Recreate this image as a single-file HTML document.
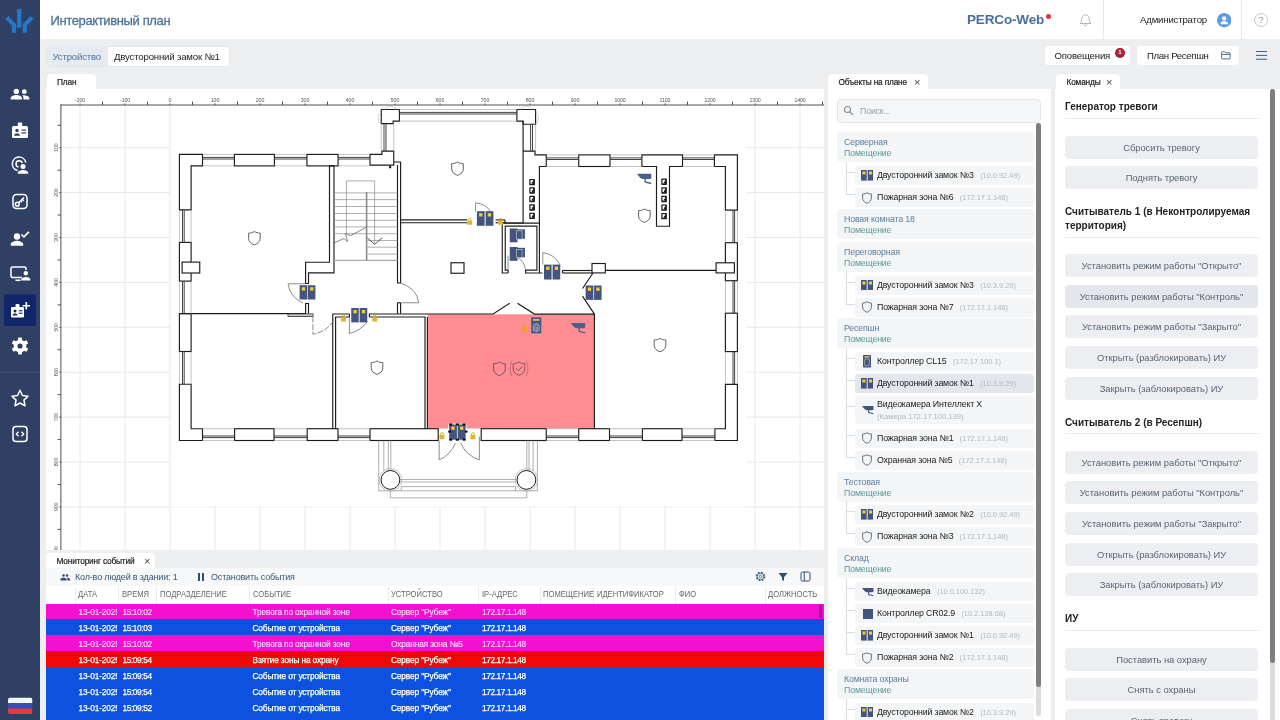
<!DOCTYPE html>
<html lang="ru">
<head>
<meta charset="utf-8">
<title>Интерактивный план</title>
<style>
*{box-sizing:border-box;margin:0;padding:0}
html,body{width:1280px;height:720px;overflow:hidden}
body{position:relative;background:#eceef0;font-family:"Liberation Sans","DejaVu Sans",sans-serif;font-size:9px;color:#222;letter-spacing:-0.17px}
.abs{position:absolute}
svg{display:block}
#side{left:0;top:0;width:40px;height:720px;background:rgba(47,63,100,.995)}
#hdr{left:40px;top:0;width:1240px;height:39px;background:rgba(255,255,255,.995)}
#title{left:50.5px;top:12.8px;-webkit-text-stroke:0.3px #4d7399;font-size:13px;line-height:16px;color:#4d7399;white-space:nowrap;letter-spacing:-0.37px}
.vdiv{width:1px;background:rgba(230,232,235,.995);top:0;height:39px}
.btn{background:rgba(255,255,255,0.995);border-radius:3px;height:19.5px;top:45.5px;line-height:20px;font-size:9.6px;color:#222;white-space:nowrap}
.tab{background:rgba(255,255,255,0.995);border-radius:4px 4px 0 0;height:15px;font-size:8.3px;line-height:17px;color:#222;white-space:nowrap;padding-left:10.5px;overflow:hidden}
.tab .x{position:absolute;top:0;font-size:11px;color:#444;line-height:16px;-webkit-text-stroke:0}
.panel{background:rgba(255,255,255,.995)}
.tbt{font-size:9px;line-height:14px;color:#3a5679;white-space:nowrap}
.cmdh{position:absolute;left:1065px;font-weight:bold;letter-spacing:0;font-size:10px;color:#222;line-height:15px;white-space:nowrap}
.hr{position:absolute;left:1065px;width:194px;height:1px;background:rgba(231,233,236,.995)}
.cb{position:absolute;left:1065px;width:193px;height:23px;border-radius:4px;background:rgba(236,238,241,0.995);color:#5b6673;font-size:9.4px;letter-spacing:-0.03px;line-height:23px;text-align:center;white-space:nowrap}
.grp{position:absolute;left:837px;width:197px;height:30px;background:rgba(244,245,246,0.995);border-radius:4px;padding:5px 0 0 7px;font-size:8.8px;line-height:11.3px;white-space:nowrap}
.grp b{font-weight:normal;color:#5b7f9f;display:block}
.grp i{font-style:normal;color:#5a9a96;display:block}
.it{position:absolute;left:855px;width:179px;height:19px;background:rgba(244,245,246,0.995);border-radius:3px;font-size:8.8px;line-height:19px;white-space:nowrap;padding-left:22px;color:#222}
.it .ip{color:#b4b8bd;font-size:7.5px;letter-spacing:-0.05px;margin-left:4.2px}
.it svg{position:absolute}
.th{position:absolute;top:587px;letter-spacing:0;font-size:8.6px;transform:scaleX(0.885);transform-origin:0 50%;color:#666;line-height:14px;white-space:nowrap}
.row{position:absolute;left:46px;width:778px;height:16px;color:#fff;letter-spacing:-0.12px;font-size:8.3px;line-height:18px;-webkit-text-stroke:0.25px #fff;white-space:nowrap}
.row span{position:absolute;top:0;white-space:nowrap}
.row .dg{letter-spacing:-0.4px}
.tab{-webkit-text-stroke:0.2px #222}
#root{position:absolute;left:0;top:0;width:1280px;height:720px;opacity:0.999}

</style>
</head>
<body>
<div id="root">
<div id="side" class="abs">
<svg width="40" height="720" viewBox="0 0 40 720">
<!-- logo -->
<g fill="none" stroke="#2279c8" stroke-width="4.2">
<path d="M19.2 9v18.5"/>
<path d="M6.8 17.5l7.2 7.3v8"/>
<path d="M32 17.5l-7.2 7.3v8"/>
</g>
<!-- people -->
<g fill="#fff">
<circle cx="16.3" cy="91.4" r="2.7"/><circle cx="24.3" cy="91.7" r="2.4"/>
<path d="M10.7 99.5v-1.6c0-2 3.7-3 5.6-3s5.6 1 5.6 3v1.6z"/>
<path d="M23.4 99.5v-1.8c0-1-.5-1.8-1.3-2.4 2.3-.4 7.2.5 7.2 2.6v1.6z"/>
</g>
<!-- badge -->
<g>
<rect x="12" y="126" width="16" height="12" rx="1.5" fill="#fff"/>
<rect x="17.8" y="122.5" width="4.4" height="5" rx="1" fill="#fff"/>
<circle cx="17" cy="130.5" r="1.7" fill="#2f3f64"/>
<path d="M14 135.8c0-1.7 1.5-2.3 3-2.3s3 .6 3 2.3z" fill="#2f3f64"/>
<rect x="21.5" y="129.5" width="4.5" height="1.2" fill="#2f3f64"/><rect x="21.5" y="132.3" width="4.5" height="1.2" fill="#2f3f64"/>
</g>
<!-- location person -->
<g fill="none" stroke="#fff" stroke-width="1.5">
<path d="M17.5 170.5a6.8 6.8 0 1 1 8.3-8"/>
<path d="M18.5 167a3.2 3.2 0 1 1 3.8-4"/>
</g>
<circle cx="23" cy="166.5" r="2.5" fill="#fff"/>
<path d="M17.8 173.8v-1c0-2 3.4-2.9 5.2-2.9s5.2.9 5.2 2.9v1z" fill="#fff"/>
<!-- key -->
<g fill="none" stroke="#fff" stroke-width="1.5">
<rect x="13" y="194.5" width="14" height="14" rx="3.5"/>
<circle cx="17.3" cy="204.2" r="1.9"/>
<path d="M18.7 202.8l5.3-5.3m-1.8 1.8l1.6 1.6m-3.2 0l1.2 1.2"/>
</g>
<!-- person check -->
<circle cx="17" cy="236.5" r="3.2" fill="#fff"/>
<path d="M10.8 245.8v-1.6c0-2.3 4.1-3.5 6.2-3.5s6.2 1.2 6.2 3.5v1.6z" fill="#fff"/>
<path d="M21.5 234.5l2.4 2.4 5-5" fill="none" stroke="#fff" stroke-width="1.7"/>
<!-- monitor person -->
<g fill="none" stroke="#fff" stroke-width="1.5">
<path d="M22 277.5h-9.5a1.5 1.5 0 0 1-1.5-1.5v-7.5a1.5 1.5 0 0 1 1.5-1.5h12a1.5 1.5 0 0 1 1.5 1.5v1.5"/>
<path d="M15.5 280.3h5"/>
</g>
<circle cx="25.8" cy="273.3" r="2.2" fill="#fff"/>
<path d="M21.3 280.5v-.9c0-1.8 3-2.6 4.5-2.6s4.5.8 4.5 2.6v.9z" fill="#fff"/>
<!-- active: badge plus -->
<rect x="4" y="294.5" width="32" height="31.5" rx="2" fill="#11266a"/>
<rect x="11" y="307" width="13" height="10.5" rx="1.3" fill="#fff"/>
<rect x="15.5" y="304" width="4" height="4.5" rx="1" fill="#fff"/>
<circle cx="15" cy="311" r="1.5" fill="#11266a"/>
<path d="M12.5 315.5c0-1.5 1.3-2 2.5-2s2.5.5 2.5 2z" fill="#11266a"/>
<rect x="18.8" y="310.2" width="3.7" height="1.1" fill="#11266a"/><rect x="18.8" y="312.7" width="3.7" height="1.1" fill="#11266a"/>
<path d="M26.3 302v7.5m-3.75-3.75h7.5" stroke="#fff" stroke-width="1.7" fill="none"/>
<!-- gear -->
<g transform="translate(20 346)">
<g fill="#fff">
<rect x="-1.9" y="-8.5" width="3.8" height="17" rx="0.8"/>
<rect x="-1.9" y="-8.5" width="3.8" height="17" rx="0.8" transform="rotate(60)"/>
<rect x="-1.9" y="-8.5" width="3.8" height="17" rx="0.8" transform="rotate(120)"/>
<circle r="6.3"/>
</g>
<circle r="2.6" fill="#2f3f64"/>
</g>
<!-- divider -->
<rect x="0" y="372" width="40" height="1" fill="#3e4f77"/>
<!-- star -->
<path d="M20 390.3l2.45 5.2 5.6.75-4.1 3.9 1.05 5.6-5-2.75-5 2.75 1.05-5.6-4.1-3.9 5.6-.75z" fill="none" stroke="#fff" stroke-width="1.5" stroke-linejoin="round"/>
<!-- code -->
<rect x="13" y="426.5" width="14" height="15" rx="3" fill="none" stroke="#fff" stroke-width="1.5"/>
<path d="M18.5 431.8l-2.2 2.2 2.2 2.2m3-4.4l2.2 2.2-2.2 2.2" fill="none" stroke="#fff" stroke-width="1.3"/>
<!-- flag -->
<clipPath id="fc"><rect x="8" y="697.5" width="24.5" height="16.5" rx="2.5"/></clipPath>
<g clip-path="url(#fc)"><rect x="8" y="697.5" width="24.5" height="5.5" fill="#f4f5f7"/><rect x="8" y="703" width="24.5" height="5.5" fill="#3a4fb5"/><rect x="8" y="708.5" width="24.5" height="5.5" fill="#e23a4a"/></g>
</svg>
</div>

<div id="hdr" class="abs"></div>
<div id="title" class="abs">Интерактивный план</div>
<div class="abs" style="left:967px;top:11px;font-size:13.5px;line-height:18px;font-weight:bold;color:#4a6ea3;letter-spacing:-0.15px;white-space:nowrap">PERCo-Web</div>
<div class="abs" style="left:1045.5px;top:14px;width:5px;height:5px;border-radius:50%;background:rgba(224,50,60,.995)"></div>
<div class="abs vdiv" style="left:1103px"></div>
<div class="abs" style="left:1140px;top:13px;font-size:9.6px;line-height:14px;color:#222;white-space:nowrap">Администратор</div>
<div class="abs vdiv" style="left:1240.5px"></div>
<div class="abs" style="left:46px;top:45.5px;width:183.5px;height:21px;background:rgba(255,255,255,.995);border-radius:3px;border:1px solid #e4e7ea"></div>
<div class="abs" style="left:46.5px;top:46px;width:61.5px;height:20px;background:rgba(229,235,241,.995);border-radius:3px 0 0 3px"></div>
<div class="abs" style="left:52.5px;top:50px;font-size:9.6px;line-height:14px;color:#4d7399;white-space:nowrap">Устройство</div>
<div class="abs" style="left:114px;top:50px;font-size:9.6px;line-height:14px;color:#222;white-space:nowrap">Двусторонний замок №1</div>
<div class="abs btn" style="left:1045px;width:85px;padding-left:9.5px">Оповещения</div>
<div class="abs" style="left:1115px;top:48px;width:9.5px;height:9.5px;border-radius:50%;background:rgba(168,35,47,.995);color:#fff;font-size:6px;line-height:9.5px;text-align:center;font-weight:bold">1</div>
<div class="abs btn" style="left:1136.5px;width:102px;padding-left:10.5px;letter-spacing:-0.33px">План Ресепшн</div>
<div class="abs" style="left:1256px;top:50.6px;width:11.2px;height:1.8px;background:rgba(52,96,140,.995);box-shadow:0 3.9px 0 #34608c,0 7.7px 0 #34608c"></div>
<svg class="abs" style="left:1078px;top:13px" width="15" height="15" viewBox="0 0 15 15" fill="none" stroke="#b3b3b3" stroke-width="1"><path d="M2 10.5c1.3-1 1.7-2.3 1.7-4.3 0-2.5 1.5-4.4 3.8-4.4s3.8 1.9 3.8 4.4c0 2 .4 3.3 1.7 4.3z"/><path d="M5.8 11.3c.2 1 .9 1.5 1.7 1.5s1.5-.5 1.7-1.5"/></svg>
<svg class="abs" style="left:1217px;top:13.4px" width="14.4" height="14.4" viewBox="0 0 14.4 14.4"><circle cx="7.2" cy="7.2" r="7.2" fill="#5b9de0"/><circle cx="7.2" cy="5.4" r="2.1" fill="#fff"/><path d="M3.3 10.8c0-2 2.4-2.8 3.9-2.8s3.9.8 3.9 2.8v.4H3.3z" fill="#fff"/></svg>
<div class="abs" style="left:1253.7px;top:13px;width:14.2px;height:14.2px;border-radius:50%;border:1px solid #c6c6c6;color:#9a9a9a;font-size:9.5px;line-height:12.5px;text-align:center;letter-spacing:0">?</div>
<svg class="abs" style="left:1220.5px;top:51px" width="10" height="9" viewBox="0 0 10 9" fill="none" stroke="#44627f" stroke-width="0.9"><path d="M.6 7.2V1.4c0-.4.3-.7.7-.7h2.4l1 1.1h3.8c.4 0 .7.3.7.7v4.7c0 .4-.3.7-.7.7H1.3c-.4 0-.7-.3-.7-.7zM.6 3.4h8.6"/></svg>

<div class="abs tab" style="left:46.5px;top:74px;width:49.5px">План</div>
<div class="abs panel" style="left:46px;top:88.5px;width:778px;height:461.5px;border-radius:0 3px 0 0"></div>
<svg class="abs" style="left:46px;top:88.5px" width="778" height="461.5" viewBox="46 88.5 778 461.5" font-family="Liberation Sans, sans-serif">
<g stroke="#e5e8ee" stroke-width="1" fill="none">
<path d="M80 105V550"/>
<path d="M125 105V550"/>
<path d="M170 105V550"/>
<path d="M215 105V550"/>
<path d="M260 105V550"/>
<path d="M305 105V550"/>
<path d="M350 105V550"/>
<path d="M395 105V550"/>
<path d="M440 105V550"/>
<path d="M485 105V550"/>
<path d="M530 105V550"/>
<path d="M575 105V550"/>
<path d="M620 105V550"/>
<path d="M665 105V550"/>
<path d="M710 105V550"/>
<path d="M755 105V550"/>
<path d="M800 105V550"/>
<path d="M61 147.2H824"/>
<path d="M61 192.1H824"/>
<path d="M61 237H824"/>
<path d="M61 281.9H824"/>
<path d="M61 326.8H824"/>
<path d="M61 371.7H824"/>
<path d="M61 416.6H824"/>
<path d="M61 461.5H824"/>
<path d="M61 506.4H824"/>
</g>
<rect x="170.4" y="102" width="576.2" height="404.2" fill="#fff"/>
<path d="M170 105V506" stroke="#eceff3" stroke-width="0.8"/>
<g fill="#fff" stroke="#1c1c1c" stroke-width="1.15" stroke-linejoin="miter">
<rect x="427.8" y="313.8" width="166.6" height="114.2" fill="#ff8d92" stroke="none"/>
<polygon points="179.4,153.9 202.5,153.9 202.5,165.4 191.1,165.4 191.1,209.4 179.4,209.4"/>
<rect x="234.4" y="153.9" width="40" height="11.5"/>
<rect x="306.9" y="153.9" width="31.2" height="11.5"/>
<polygon points="370,153.9 381.9,153.9 381.9,150.6 393.75,150.6 393.75,164.6 370,164.6"/>
<rect x="179.4" y="241.9" width="11.7" height="38.7"/>
<rect x="179.4" y="313.1" width="11.7" height="37.9"/>
<polygon points="179.4,383.75 191.1,383.75 191.1,428.2 202.5,428.2 202.5,440 179.4,440"/>
<rect x="234.6" y="428.2" width="39.4" height="11.8"/>
<rect x="307.2" y="428.2" width="30.8" height="11.8"/>
<rect x="370" y="428.2" width="68.2" height="11.8"/>
<rect x="481.2" y="428.2" width="65.05" height="11.8"/>
<rect x="578.75" y="428.2" width="30.75" height="11.8"/>
<rect x="642.4" y="428.2" width="39.6" height="11.8"/>
<polygon points="725.4,383.8 737.4,383.8 737.4,440 714.9,440 714.9,428.2 725.4,428.2"/>
<rect x="725.4" y="242.2" width="12" height="38"/>
<rect x="725.4" y="312.7" width="12" height="38.4"/>
<polygon points="714.4,154.4 737.4,154.4 737.4,209.6 725.4,209.6 725.4,166 714.4,166"/>
<rect x="578.75" y="154.4" width="31.25" height="11.6"/>
<polygon points="641.9,154.4 682.5,154.4 682.5,166 669.5,166 669.5,225.7 656.5,225.7 656.5,166 641.9,166"/>
<polygon points="381.25,109 399.4,109 399.4,120.6 393.1,120.6 393.1,123.1 381.25,123.1"/>
<polygon points="516.9,109 535.6,109 535.6,123.75 523.1,123.75 523.1,120.6 516.9,120.6"/>
<polyline points="523.1,120.6 523.1,222.5 505,222.5 505,219.4" fill="none"/>
<polyline points="523.1,150.6 535,150.6 535,154.4 546.25,154.4 546.25,166 539.4,166 539.4,272.5" fill="none"/>
<polyline points="393.75,161.5 400.6,161.5 400.6,282.5 397.5,282.5 397.5,164.6" fill="none"/>
<polyline points="397.5,302.25 397.5,313.3" fill="none"/>
<polyline points="400.6,302.25 400.6,313.3" fill="none"/>
<polyline points="397.5,302.25 400.6,302.25" fill="none"/>
<polyline points="400.6,219.4 467,219.4" fill="none"/>
<polyline points="400.6,222.25 467,222.25" fill="none"/>
<polyline points="495.6,219.4 505,219.4" fill="none"/>
<polyline points="495.6,222.25 505,222.25" fill="none"/>
<polygon points="329.5,165.4 329.5,261.7 305.6,261.7 305.6,283 308.5,283 308.5,272.3 334,272.3 334,165.4" fill="none"/>
<polyline points="305.6,313.1 305.6,303 308.5,303 308.5,313.1" fill="none"/>
<polyline points="179.4,313.1 306,313.1" fill="none"/>
<rect x="288" y="313.4" width="25.1" height="2.6" fill="#c4c4c4" stroke-width="0.7"/>
<polyline points="349.4,313.5 332.75,313.5 332.75,428.2" fill="none"/>
<polyline points="349.4,316.5 335.6,316.5 335.6,428.2" fill="none"/>
<polyline points="349.4,313.5 349.4,316.5" fill="none"/>
<polyline points="369.4,316.5 369.4,313.5 493.1,313.5 509.75,302.75" fill="none"/>
<polyline points="369.4,316.5 425,316.5 425,428.2" fill="none"/>
<polyline points="427.4,316.5 427.4,428.2" fill="none"/>
<polyline points="517.5,302.75 534.4,313.6 594.4,313.6 594.4,428.2" fill="none"/>
<polyline points="594.4,313.6 582.5,295.6" fill="none"/>
<polyline points="582.5,288 593,272.5" fill="none"/>
<polyline points="508.1,272.5 502.25,272.5 502.25,222.6 540,222.6" fill="none"/>
<polyline points="508.1,269.6 505.25,269.6 505.25,225.6 536.9,225.6 536.9,269.6 525.6,269.6 525.6,272.5 542.5,272.5" fill="none"/>
<polyline points="508.1,269.6 508.1,272.5" fill="none"/>
<polyline points="562.5,270 592,270" fill="none"/>
<polyline points="562.5,272.5 592,272.5" fill="none"/>
<polyline points="562.5,270 562.5,272.5" fill="none"/>
<polyline points="605.3,269.9 716.1,269.9" fill="none"/>
<rect x="182.1" y="261.6" width="17.65" height="10.9"/>
<rect x="451" y="262.25" width="13" height="10.5"/>
<rect x="592" y="263" width="13.3" height="9.4"/>
<rect x="716.1" y="262.3" width="18.3" height="10.1"/>
</g>
<g fill="none" stroke="#9a9a9a" stroke-width="0.6">
<path d="M202.5 153.9H234.4M202.5 165.4H234.4"/>
<path d="M202.5 156.9H234.4M202.5 158.5H234.4" stroke="#3a3a3a" stroke-width="0.95"/>
<path d="M274.4 153.9H306.9M274.4 165.4H306.9"/>
<path d="M274.4 156.9H306.9M274.4 158.5H306.9" stroke="#3a3a3a" stroke-width="0.95"/>
<path d="M338.1 153.9H370M338.1 165.4H370"/>
<path d="M338.1 156.9H370M338.1 158.5H370" stroke="#3a3a3a" stroke-width="0.95"/>
<path d="M202.5 440H234.6M202.5 428.2H234.6"/>
<path d="M202.5 437.1H234.6M202.5 435.5H234.6" stroke="#3a3a3a" stroke-width="0.95"/>
<path d="M274 440H307.2M274 428.2H307.2"/>
<path d="M274 437.1H307.2M274 435.5H307.2" stroke="#3a3a3a" stroke-width="0.95"/>
<path d="M338 440H370M338 428.2H370"/>
<path d="M338 437.1H370M338 435.5H370" stroke="#3a3a3a" stroke-width="0.95"/>
<path d="M546.25 154.4H578.75M546.25 166H578.75"/>
<path d="M546.25 157.4H578.75M546.25 159H578.75" stroke="#3a3a3a" stroke-width="0.95"/>
<path d="M610 154.4H641.9M610 166H641.9"/>
<path d="M610 157.4H641.9M610 159H641.9" stroke="#3a3a3a" stroke-width="0.95"/>
<path d="M682.5 154.4H714.4M682.5 166H714.4"/>
<path d="M682.5 157.4H714.4M682.5 159H714.4" stroke="#3a3a3a" stroke-width="0.95"/>
<path d="M546.25 440H578.75M546.25 428.2H578.75"/>
<path d="M546.25 437.1H578.75M546.25 435.5H578.75" stroke="#3a3a3a" stroke-width="0.95"/>
<path d="M609.5 440H642.4M609.5 428.2H642.4"/>
<path d="M609.5 437.1H642.4M609.5 435.5H642.4" stroke="#3a3a3a" stroke-width="0.95"/>
<path d="M682 440H714.9M682 428.2H714.9"/>
<path d="M682 437.1H714.9M682 435.5H714.9" stroke="#3a3a3a" stroke-width="0.95"/>
<path d="M179.4 209.4V241.9M191.1 209.4V241.9"/>
<path d="M182.5 209.4V241.9M184.2 209.4V241.9" stroke="#3a3a3a" stroke-width="0.95"/>
<path d="M179.4 280.6V313.1M191.1 280.6V313.1"/>
<path d="M182.5 280.6V313.1M184.2 280.6V313.1" stroke="#3a3a3a" stroke-width="0.95"/>
<path d="M179.4 351V383.75M191.1 351V383.75"/>
<path d="M182.5 351V383.75M184.2 351V383.75" stroke="#3a3a3a" stroke-width="0.95"/>
<path d="M737.4 209.6V242.2M725.4 209.6V242.2"/>
<path d="M734.6 209.6V242.2M733 209.6V242.2" stroke="#3a3a3a" stroke-width="0.95"/>
<path d="M737.4 280.2V312.7M725.4 280.2V312.7"/>
<path d="M734.6 280.2V312.7M733 280.2V312.7" stroke="#3a3a3a" stroke-width="0.95"/>
<path d="M737.4 351.1V383.8M725.4 351.1V383.8"/>
<path d="M734.6 351.1V383.8M733 351.1V383.8" stroke="#3a3a3a" stroke-width="0.95"/>
<path d="M399.4 109H516.9M399.4 120.6H516.9"/>
<path d="M399.4 111.9H516.9M399.4 113.5H516.9" stroke="#3a3a3a" stroke-width="0.95"/>
<path d="M381.25 123.1V150.6M393.75 123.1V150.6"/>
<path d="M384 123.1V150.6M386 123.1V150.6" stroke="#3a3a3a" stroke-width="0.95"/>
<path d="M535.6 123.75V150.6"/><path d="M530.6 123.75V150.6M532.5 123.75V150.6" stroke="#3a3a3a" stroke-width="0.95"/>
<path d="M385 109a5.5 3 0 0 1 11 0M381.25 112a3 5.5 0 0 0 0 11M521 109a5.5 3 0 0 1 11 0M535.6 112a3 5.5 0 0 1 0 11" stroke="#bbb"/>
<g stroke="#8c8c8c" stroke-width="0.7">
<path d="M334 192.4H397.5"/>
<path d="M334 199.1H397.5"/>
<path d="M334 206H397.5"/>
<path d="M334 213H397.5"/>
<path d="M334 219.8H397.5"/>
<path d="M334 226.4H397.5"/>
<path d="M334 233.2H397.5"/>
<path d="M367.5 240H397.5"/>
<path d="M367.5 246.7H397.5"/>
<path d="M367.5 253.6H397.5"/>
<path d="M334 259.9H397.5" stroke-width="1.2" stroke="#aaa"/>
<path d="M346.4 233V180.4H374.6V243" />
<path d="M366.6 191.4V259.9" stroke-width="1.6" stroke="#8a8a8a"/>
<path d="M334 242.4L344 238L347.6 241L345.4 233L350.5 235.1L365.8 227.1" stroke="#555"/>
<path d="M367.3 237.3L374.6 243.9L382.2 237.3" stroke="#555" stroke-width="1"/>
</g>
<g stroke="#808080" stroke-width="0.9">
<path d="M305.6 283.3H288Q290 297 303 302.5"/>
<path d="M400.6 302.25H418.75Q417 288 400.6 282.5"/>
<path d="M312.9 316V333.75Q328 331 335 317.5" stroke-dasharray="6 1.5"/>
<path d="M349.4 316.5V333Q361 330 367.5 321"/>
<path d="M475.6 211V202.25Q486 203.5 490.5 211"/>
<path d="M508.1 269.6V255M518 257.5Q524.5 261 525.6 269.6"/>
<path d="M542.75 264V252Q555 254 560 264.4"/>
<path d="M439.2 440V459.4Q450 455 455.5 442.5M479.4 436V459.4Q466 455 460.7 442.5"/>
</g>
<g stroke="#8e8e8e" stroke-width="0.7">
<path d="M378.7 440V490.3H537.4V440M383.8 440V470M388.3 440V470M390.8 440V470M526.8 440V470M529 440V470M533.1 440V470"/>
<path d="M400 479H516.5M400 481.5H516.5M401.2 486.1H515.6M401.2 486.1V490.3M515.6 486.1V490.3M390.4 490.3V497.4H526.8V490.3"/>
<circle cx="390.4" cy="479.4" r="11.3" stroke="#aaa"/><circle cx="526.4" cy="479.4" r="11.3" stroke="#aaa"/>
</g>
<circle cx="390.4" cy="479.4" r="9.4" fill="#fff" stroke="#1c1c1c" stroke-width="1"/><circle cx="526.4" cy="479.4" r="9.4" fill="#fff" stroke="#1c1c1c" stroke-width="1"/>
</g>
<rect x="299.6" y="284.75" width="7.45" height="14.25" fill="#43557f"/><rect x="307.95" y="284.75" width="7.45" height="14.25" fill="#43557f"/>
<rect x="307.05" y="284.75" width="0.9" height="14.25" fill="#aebbd6"/>
<rect x="301.8" y="286.75" width="3.3" height="3.3" fill="#f2cf3a"/><rect x="310.15" y="286.75" width="3.3" height="3.3" fill="#f2cf3a"/>
<rect x="351.25" y="307.5" width="7.55" height="14.4" fill="#43557f"/><rect x="359.7" y="307.5" width="7.55" height="14.4" fill="#43557f"/>
<rect x="358.8" y="307.5" width="0.9" height="14.4" fill="#aebbd6"/>
<rect x="353.45" y="309.5" width="3.3" height="3.3" fill="#f2cf3a"/><rect x="361.9" y="309.5" width="3.3" height="3.3" fill="#f2cf3a"/>
<rect x="476.9" y="210.7" width="7.8" height="14.6" fill="#43557f"/><rect x="485.6" y="210.7" width="7.8" height="14.6" fill="#43557f"/>
<rect x="484.7" y="210.7" width="0.9" height="14.6" fill="#aebbd6"/>
<rect x="479.1" y="212.7" width="3.3" height="3.3" fill="#f2cf3a"/><rect x="487.8" y="212.7" width="3.3" height="3.3" fill="#f2cf3a"/>
<rect x="544" y="264.1" width="7.67" height="14.9" fill="#43557f"/><rect x="552.57" y="264.1" width="7.67" height="14.9" fill="#43557f"/>
<rect x="551.67" y="264.1" width="0.9" height="14.9" fill="#aebbd6"/>
<rect x="546.2" y="266.1" width="3.3" height="3.3" fill="#f2cf3a"/><rect x="554.77" y="266.1" width="3.3" height="3.3" fill="#f2cf3a"/>
<rect x="585.6" y="285" width="7.55" height="14.4" fill="#43557f"/><rect x="594.05" y="285" width="7.55" height="14.4" fill="#43557f"/>
<rect x="593.15" y="285" width="0.9" height="14.4" fill="#aebbd6"/>
<rect x="587.8" y="287" width="3.3" height="3.3" fill="#f2cf3a"/><rect x="596.25" y="287" width="3.3" height="3.3" fill="#f2cf3a"/>
<rect x="448.4" y="423.2" width="18" height="16.8" fill="#fff"/>
<rect x="449.2" y="424" width="7.75" height="15.2" fill="#43557f"/><rect x="457.85" y="424" width="7.75" height="15.2" fill="#43557f"/>
<rect x="456.95" y="424" width="0.9" height="15.2" fill="#aebbd6"/>
<rect x="451.4" y="426" width="3.3" height="3.3" fill="#f2cf3a"/><rect x="460.05" y="426" width="3.3" height="3.3" fill="#f2cf3a"/>
<rect x="449.2" y="423" width="3" height="2" fill="#111"/>
<rect x="455.9" y="423" width="3" height="2" fill="#111"/>
<rect x="462.6" y="423" width="3" height="2" fill="#111"/>
<rect x="448.2" y="430.1" width="3" height="2" fill="#111"/>
<rect x="464.6" y="430.1" width="3" height="2" fill="#111"/>
<rect x="449.2" y="438.2" width="3" height="2" fill="#111"/>
<rect x="455.9" y="438.2" width="3" height="2" fill="#111"/>
<rect x="462.6" y="438.2" width="3" height="2" fill="#111"/>
<rect x="341" y="316.8" width="5" height="4.3" rx="0.6" fill="#e3b42a"/><path d="M342.1 317v-1.1a1.4 1.4 0 0 1 2.8 0v1.1" fill="none" stroke="#e3b42a" stroke-width="1"/>
<rect x="372.25" y="316.8" width="5" height="4.3" rx="0.6" fill="#e3b42a"/><path d="M373.35 317v-1.1a1.4 1.4 0 0 1 2.8 0v1.1" fill="none" stroke="#e3b42a" stroke-width="1"/>
<rect x="467.1" y="220.05" width="5" height="4.3" rx="0.6" fill="#e3b42a"/><path d="M468.2 220.25v-1.1a1.4 1.4 0 0 1 2.8 0v1.1" fill="none" stroke="#e3b42a" stroke-width="1"/>
<rect x="498.1" y="220.05" width="5" height="4.3" rx="0.6" fill="#e3b42a"/><path d="M499.2 220.25v-1.1a1.4 1.4 0 0 1 2.8 0v1.1" fill="none" stroke="#e3b42a" stroke-width="1"/>
<rect x="439.4" y="434.4" width="5" height="4.3" rx="0.6" fill="#e3b42a"/><path d="M440.5 434.6v-1.1a1.4 1.4 0 0 1 2.8 0v1.1" fill="none" stroke="#e3b42a" stroke-width="1"/>
<rect x="470.4" y="434.4" width="5" height="4.3" rx="0.6" fill="#e3b42a"/><path d="M471.5 434.6v-1.1a1.4 1.4 0 0 1 2.8 0v1.1" fill="none" stroke="#e3b42a" stroke-width="1"/>
<rect x="521.9" y="326.8" width="5" height="4.3" rx="0.6" fill="#f0a21c"/><path d="M523 327v-1.1a1.4 1.4 0 0 1 2.8 0v1.1" fill="none" stroke="#f0a21c" stroke-width="1"/>
<path transform="translate(254.4 237.5)" d="M0 -6.6C-1.7 -5.3 -3.6 -4.9 -5.8 -4.9V0.5C-5.8 3.7 -3.2 5.8 0 6.9C3.2 5.8 5.8 3.7 5.8 0.5V-4.9C3.6 -4.9 1.7 -5.3 0 -6.6Z" fill="none" stroke="#4c525c" stroke-width="0.9"/>
<path transform="translate(457.5 168)" d="M0 -6.6C-1.7 -5.3 -3.6 -4.9 -5.8 -4.9V0.5C-5.8 3.7 -3.2 5.8 0 6.9C3.2 5.8 5.8 3.7 5.8 0.5V-4.9C3.6 -4.9 1.7 -5.3 0 -6.6Z" fill="none" stroke="#4c525c" stroke-width="0.9"/>
<path transform="translate(644.4 215)" d="M0 -6.6C-1.7 -5.3 -3.6 -4.9 -5.8 -4.9V0.5C-5.8 3.7 -3.2 5.8 0 6.9C3.2 5.8 5.8 3.7 5.8 0.5V-4.9C3.6 -4.9 1.7 -5.3 0 -6.6Z" fill="none" stroke="#4c525c" stroke-width="0.9"/>
<path transform="translate(377 367)" d="M0 -6.6C-1.7 -5.3 -3.6 -4.9 -5.8 -4.9V0.5C-5.8 3.7 -3.2 5.8 0 6.9C3.2 5.8 5.8 3.7 5.8 0.5V-4.9C3.6 -4.9 1.7 -5.3 0 -6.6Z" fill="none" stroke="#4c525c" stroke-width="0.9"/>
<path transform="translate(660 344.4)" d="M0 -6.6C-1.7 -5.3 -3.6 -4.9 -5.8 -4.9V0.5C-5.8 3.7 -3.2 5.8 0 6.9C3.2 5.8 5.8 3.7 5.8 0.5V-4.9C3.6 -4.9 1.7 -5.3 0 -6.6Z" fill="none" stroke="#4c525c" stroke-width="0.9"/>
<path transform="translate(499.4 368.1)" d="M0 -6.6C-1.7 -5.3 -3.6 -4.9 -5.8 -4.9V0.5C-5.8 3.7 -3.2 5.8 0 6.9C3.2 5.8 5.8 3.7 5.8 0.5V-4.9C3.6 -4.9 1.7 -5.3 0 -6.6Z" fill="none" stroke="#5d4f60" stroke-width="0.9"/>
<path transform="translate(519 368)" d="M0 -6.6C-1.7 -5.3 -3.6 -4.9 -5.8 -4.9V0.5C-5.8 3.7 -3.2 5.8 0 6.9C3.2 5.8 5.8 3.7 5.8 0.5V-4.9C3.6 -4.9 1.7 -5.3 0 -6.6Z" fill="none" stroke="#72505f" stroke-width="0.9"/>
<path transform="translate(519 368)" d="M-3 -0.3L-0.6 2.1L3.3 -2" fill="none" stroke="#72505f" stroke-width="0.9"/>
<path d="M511.8 360.5Q508.3 368 511.8 375.5M526.2 360.5Q529.7 368 526.2 375.5" fill="none" stroke="#b56672" stroke-width="0.8"/>
<path transform="translate(636.9 173.2)" d="M0 0H14.4V3.8C14.4 4.8 13.6 5.3 12.7 5.3H5.6L3.4 4.2Z" fill="#4a5f8c"/><path transform="translate(636.9 173.2)" d="M8.3 5V8.3L14.3 9.8" fill="none" stroke="#4a5f8c" stroke-width="1.3"/>
<path transform="translate(570.8 322.5)" d="M0 0H14.4V3.8C14.4 4.8 13.6 5.3 12.7 5.3H5.6L3.4 4.2Z" fill="#4a5f8c"/><path transform="translate(570.8 322.5)" d="M8.3 5V8.3L14.3 9.8" fill="none" stroke="#4a5f8c" stroke-width="1.3"/>
<rect x="509.75" y="228" width="7.8" height="13.8" fill="#43557f"/><rect x="516.35" y="228.8" width="8.6" height="9.5" fill="#43557f"/><rect x="516.65" y="230.3" width="5.4" height="8.3" fill="#43557f" stroke="#c9d3e8" stroke-width="0.6"/>
<rect x="509.75" y="246.5" width="7.8" height="13.8" fill="#43557f"/><rect x="516.35" y="247.3" width="8.6" height="9.5" fill="#43557f"/><rect x="516.65" y="248.8" width="5.4" height="8.3" fill="#43557f" stroke="#c9d3e8" stroke-width="0.6"/>
<rect x="531.25" y="316.9" width="10" height="16" fill="#43557f"/><rect x="533" y="318.6" width="6.5" height="1.6" fill="#f2cf3a"/>
<g fill="none" stroke="#d6deef" stroke-width="0.6"><path d="M533.3 330.5V326a3 3 0 0 1 6 0V330.5"/><path d="M534.8 331.5V326.2a1.5 1.5 0 0 1 3 0V331.5"/><path d="M536.3 326.5V332"/></g>
<rect x="529.3" y="178.4" width="5.6" height="6.4" rx="0.6" fill="#1b1b1b"/><rect x="530.5" y="179.6" width="2.6" height="3.6" fill="#fff"/><rect x="531.9" y="181.3" width="1.8" height="1.8" fill="#1b1b1b"/>
<rect x="529.3" y="186.8" width="5.6" height="6.4" rx="0.6" fill="#1b1b1b"/><rect x="530.5" y="188" width="2.6" height="3.6" fill="#fff"/><rect x="531.9" y="189.7" width="1.8" height="1.8" fill="#1b1b1b"/>
<rect x="529.3" y="195.3" width="5.6" height="6.4" rx="0.6" fill="#1b1b1b"/><rect x="530.5" y="196.5" width="2.6" height="3.6" fill="#fff"/><rect x="531.9" y="198.2" width="1.8" height="1.8" fill="#1b1b1b"/>
<rect x="529.3" y="203.8" width="5.6" height="6.4" rx="0.6" fill="#1b1b1b"/><rect x="530.5" y="205" width="2.6" height="3.6" fill="#fff"/><rect x="531.9" y="206.7" width="1.8" height="1.8" fill="#1b1b1b"/>
<rect x="529.3" y="212.2" width="5.6" height="6.4" rx="0.6" fill="#1b1b1b"/><rect x="530.5" y="213.4" width="2.6" height="3.6" fill="#fff"/><rect x="531.9" y="215.1" width="1.8" height="1.8" fill="#1b1b1b"/>
<rect x="661.3" y="178.05" width="5.6" height="6.4" rx="0.6" fill="#1b1b1b"/><rect x="662.5" y="179.25" width="2.6" height="3.6" fill="#fff"/><rect x="663.9" y="180.95" width="1.8" height="1.8" fill="#1b1b1b"/>
<rect x="661.3" y="186.8" width="5.6" height="6.4" rx="0.6" fill="#1b1b1b"/><rect x="662.5" y="188" width="2.6" height="3.6" fill="#fff"/><rect x="663.9" y="189.7" width="1.8" height="1.8" fill="#1b1b1b"/>
<rect x="661.3" y="195.3" width="5.6" height="6.4" rx="0.6" fill="#1b1b1b"/><rect x="662.5" y="196.5" width="2.6" height="3.6" fill="#fff"/><rect x="663.9" y="198.2" width="1.8" height="1.8" fill="#1b1b1b"/>
<rect x="661.3" y="203.9" width="5.6" height="6.4" rx="0.6" fill="#1b1b1b"/><rect x="662.5" y="205.1" width="2.6" height="3.6" fill="#fff"/><rect x="663.9" y="206.8" width="1.8" height="1.8" fill="#1b1b1b"/>
<rect x="661.3" y="212.4" width="5.6" height="6.4" rx="0.6" fill="#1b1b1b"/><rect x="662.5" y="213.6" width="2.6" height="3.6" fill="#fff"/><rect x="663.9" y="215.3" width="1.8" height="1.8" fill="#1b1b1b"/>
<rect x="389" y="165.2" width="2.2" height="2.6" rx="0.5" fill="#222"/>
<rect x="46" y="88.5" width="778" height="15.5" fill="#fff" fill-opacity=".995"/>
<rect x="46" y="88.5" width="14.5" height="461.5" fill="#fff" fill-opacity=".995"/>
<g stroke="#505050" stroke-width="1" fill="none">
<path d="M60.4 104.5H824M60.9 104V550"/>
<path d="M80 104.5v-1.6M102.5 104.5v-3.4M125 104.5v-1.6M147.5 104.5v-3.4M170 104.5v-1.6M192.5 104.5v-3.4M215 104.5v-1.6M237.5 104.5v-3.4M260 104.5v-1.6M282.5 104.5v-3.4M305 104.5v-1.6M327.5 104.5v-3.4M350 104.5v-1.6M372.5 104.5v-3.4M395 104.5v-1.6M417.5 104.5v-3.4M440 104.5v-1.6M462.5 104.5v-3.4M485 104.5v-1.6M507.5 104.5v-3.4M530 104.5v-1.6M552.5 104.5v-3.4M575 104.5v-1.6M597.5 104.5v-3.4M620 104.5v-1.6M642.5 104.5v-3.4M665 104.5v-1.6M687.5 104.5v-3.4M710 104.5v-1.6M732.5 104.5v-3.4M755 104.5v-1.6M777.5 104.5v-3.4M800 104.5v-1.6M822.5 104.5v-3.4"/>
<path d="M60.9 124.75h-3.4M60.9 147.2h-1.6M60.9 169.65h-3.4M60.9 192.1h-1.6M60.9 214.55h-3.4M60.9 237h-1.6M60.9 259.45h-3.4M60.9 281.9h-1.6M60.9 304.35h-3.4M60.9 326.8h-1.6M60.9 349.25h-3.4M60.9 371.7h-1.6M60.9 394.15h-3.4M60.9 416.6h-1.6M60.9 439.05h-3.4M60.9 461.5h-1.6M60.9 483.95h-3.4M60.9 506.4h-1.6M60.9 528.85h-3.4"/>
</g>
<g font-size="5.2" fill="#555" text-anchor="middle" letter-spacing="-0.1" opacity=".999">
<text x="80" y="101.3">-200</text>
<text x="125" y="101.3">-100</text>
<text x="170" y="101.3">0</text>
<text x="215" y="101.3">100</text>
<text x="260" y="101.3">200</text>
<text x="305" y="101.3">300</text>
<text x="350" y="101.3">400</text>
<text x="395" y="101.3">500</text>
<text x="440" y="101.3">600</text>
<text x="485" y="101.3">700</text>
<text x="530" y="101.3">800</text>
<text x="575" y="101.3">900</text>
<text x="620" y="101.3">1000</text>
<text x="665" y="101.3">1100</text>
<text x="710" y="101.3">1200</text>
<text x="755" y="101.3">1300</text>
<text x="800" y="101.3">1400</text>
<text transform="translate(57.8 147.2) rotate(-90)">100</text>
<text transform="translate(57.8 192.1) rotate(-90)">200</text>
<text transform="translate(57.8 237) rotate(-90)">300</text>
<text transform="translate(57.8 281.9) rotate(-90)">400</text>
<text transform="translate(57.8 326.8) rotate(-90)">500</text>
<text transform="translate(57.8 371.7) rotate(-90)">600</text>
<text transform="translate(57.8 416.6) rotate(-90)">700</text>
<text transform="translate(57.8 461.5) rotate(-90)">800</text>
<text transform="translate(57.8 506.4) rotate(-90)">900</text>
<text transform="translate(57.8 551.3) rotate(-90)">1000</text>
</g>
</svg>

<div class="abs tab" style="left:46px;top:553px;width:109px">Мониторинг событий<span class="x" style="left:98px">×</span></div>
<div class="abs panel" style="left:46px;top:567.5px;width:778px;height:152.5px"></div>
<div class="abs" style="left:46px;top:567.5px;width:778px;height:18px;background:rgba(246,248,250,.995)"></div>
<svg class="abs" style="left:60px;top:571.6px" width="10.6" height="10.6" viewBox="0 0 24 24"><path fill="#2f4d74" d="M16 11a3 3 0 1 0 0-6 3 3 0 0 0 0 6zm-8 0a3 3 0 1 0 0-6 3 3 0 0 0 0 6zm0 2c-2.3 0-7 1.2-7 3.5V19h14v-2.5C15 14.2 10.3 13 8 13zm8 0c-.3 0-.6 0-1 .1 1.2.8 2 2 2 3.4V19h6v-2.5c0-2.3-4.7-3.5-7-3.5z"/></svg>
<div class="abs tbt" style="left:75px;top:570px">Кол-во людей в здании: 1</div>
<div class="abs" style="left:198px;top:573px;width:2px;height:8px;background:rgba(47,77,116,.995)"></div><div class="abs" style="left:202px;top:573px;width:2px;height:8px;background:rgba(47,77,116,.995)"></div>
<div class="abs tbt" style="left:211px;top:570px">Остановить события</div>
<svg class="abs" style="left:755px;top:571.2px" width="11" height="11" viewBox="-5.5 -5.5 11 11" fill="none" stroke="#44607f"><circle r="4.1" stroke-width="1.5" stroke-dasharray="1.75 1.47"/><circle r="3.3" stroke-width="0.9"/><circle r="1.35" stroke-width="0.85"/></svg>
<svg class="abs" style="left:778px;top:572px" width="10" height="10" viewBox="0 0 20 20"><path fill="#2f4d74" d="M1 2h18l-7 8.5V18l-4-2.5V10.5z"/></svg>
<svg class="abs" style="left:800px;top:571px" width="11" height="11" viewBox="0 0 22 22" fill="none" stroke="#2f4d74" stroke-width="2"><rect x="2" y="2" width="18" height="18" rx="3"/><path d="M8.5 2v18"/></svg>
<div class="abs" style="left:74.5px;top:587px;width:1px;height:17px;background:rgba(233,235,238,.995)"></div>
<div class="abs" style="left:118px;top:587px;width:1px;height:17px;background:rgba(233,235,238,.995)"></div>
<div class="abs" style="left:155.5px;top:587px;width:1px;height:17px;background:rgba(233,235,238,.995)"></div>
<div class="abs" style="left:248.5px;top:587px;width:1px;height:17px;background:rgba(233,235,238,.995)"></div>
<div class="abs" style="left:387.5px;top:587px;width:1px;height:17px;background:rgba(233,235,238,.995)"></div>
<div class="abs" style="left:478px;top:587px;width:1px;height:17px;background:rgba(233,235,238,.995)"></div>
<div class="abs" style="left:539.5px;top:587px;width:1px;height:17px;background:rgba(233,235,238,.995)"></div>
<div class="abs" style="left:593px;top:587px;width:1px;height:17px;background:rgba(233,235,238,.995)"></div>
<div class="abs" style="left:675px;top:587px;width:1px;height:17px;background:rgba(233,235,238,.995)"></div>
<div class="abs" style="left:764.5px;top:587px;width:1px;height:17px;background:rgba(233,235,238,.995)"></div>
<div class="th" style="left:78px">ДАТА</div>
<div class="th" style="left:122px">ВРЕМЯ</div>
<div class="th" style="left:159.5px">ПОДРАЗДЕЛЕНИЕ</div>
<div class="th" style="left:252.5px">СОБЫТИЕ</div>
<div class="th" style="left:391px">УСТРОЙСТВО</div>
<div class="th" style="left:482px">IP-АДРЕС</div>
<div class="th" style="left:543px">ПОМЕЩЕНИЕ</div>
<div class="th" style="left:597px">ИДЕНТИФИКАТОР</div>
<div class="th" style="left:679px">ФИО</div>
<div class="th" style="left:768px">ДОЛЖНОСТЬ</div>
<div class="row" style="top:604px;height:15px;line-height:16px;background:rgba(244,15,207,.995);color:#ffe2f8;-webkit-text-stroke:0.1px #ffe2f8"><span style="left:32.5px;width:38.5px;overflow:hidden">13-01-2025</span><span class="dg" style="left:76.5px">15:10:02</span><span style="left:206.5px">Тревога по охранной зоне</span><span style="left:345px">Сервер "Рубеж"</span><span class="dg" style="left:436px">172.17.1.148</span></div>
<div class="row" style="top:619px;background:rgba(11,80,224,.995)"><span style="left:32.5px;width:38.5px;overflow:hidden">13-01-2025</span><span class="dg" style="left:76.5px">15:10:03</span><span style="left:206.5px">Событие от устройства</span><span style="left:345px">Сервер "Рубеж"</span><span class="dg" style="left:436px">172.17.1.148</span></div>
<div class="row" style="top:635px;background:rgba(244,15,207,.995);color:#ffe2f8;-webkit-text-stroke:0.1px #ffe2f8"><span style="left:32.5px;width:38.5px;overflow:hidden">13-01-2025</span><span class="dg" style="left:76.5px">15:10:02</span><span style="left:206.5px">Тревога по охранной зоне</span><span style="left:345px">Охранная зона №5</span><span class="dg" style="left:436px">172.17.1.148</span></div>
<div class="row" style="top:651px;background:rgba(238,7,7,.995)"><span style="left:32.5px;width:38.5px;overflow:hidden">13-01-2025</span><span class="dg" style="left:76.5px">15:09:54</span><span style="left:206.5px">Взятие зоны на охрану</span><span style="left:345px">Сервер "Рубеж"</span><span class="dg" style="left:436px">172.17.1.148</span></div>
<div class="row" style="top:667px;background:rgba(11,80,224,.995)"><span style="left:32.5px;width:38.5px;overflow:hidden">13-01-2025</span><span class="dg" style="left:76.5px">15:09:54</span><span style="left:206.5px">Событие от устройства</span><span style="left:345px">Сервер "Рубеж"</span><span class="dg" style="left:436px">172.17.1.148</span></div>
<div class="row" style="top:683px;background:rgba(11,80,224,.995)"><span style="left:32.5px;width:38.5px;overflow:hidden">13-01-2025</span><span class="dg" style="left:76.5px">15:09:54</span><span style="left:206.5px">Событие от устройства</span><span style="left:345px">Сервер "Рубеж"</span><span class="dg" style="left:436px">172.17.1.148</span></div>
<div class="row" style="top:699px;background:rgba(11,80,224,.995)"><span style="left:32.5px;width:38.5px;overflow:hidden">13-01-2025</span><span class="dg" style="left:76.5px">15:09:52</span><span style="left:206.5px">Событие от устройства</span><span style="left:345px">Сервер "Рубеж"</span><span class="dg" style="left:436px">172.17.1.148</span></div>
<div class="row" style="top:715px;background:rgba(11,80,224,.995)"></div>
<div class="abs" style="left:819px;top:605px;width:3px;height:13px;background:rgba(165,22,155,.995);border-radius:1px"></div>
<div class="abs tab" style="left:828px;top:74px;width:100px">Объекты на плане<span class="x" style="left:86px">×</span></div>
<div class="abs panel" style="left:828px;top:89px;width:223px;height:631px"></div>
<div class="abs" style="left:837px;top:99px;width:204px;height:24px;border:1px solid #e3e6e9;background:rgba(245,246,247,.995);border-radius:4px"></div>
<svg class="abs" style="left:843px;top:105px" width="11" height="11" viewBox="0 0 22 22" fill="none" stroke="#8a9097" stroke-width="2.2"><circle cx="9" cy="9" r="6"/><path d="M13.5 13.5L20 20"/></svg>
<div class="abs" style="left:860px;top:104px;font-size:8.8px;line-height:14px;color:#9aa0a6">Поиск...</div>
<div class="abs" style="left:1035.5px;top:123px;width:5.5px;height:592.5px;background:rgba(220,220,220,.995);border-radius:3px"></div>
<div class="abs" style="left:1035.5px;top:123px;width:5.5px;height:564px;background:rgba(125,125,125,.995);border-radius:3px"></div>
<div class="grp" style="top:132.0px"><b>Серверная</b><i>Помещение</i></div>
<div class="abs" style="left:845.5px;top:162px;width:1px;height:33.0px;background:rgba(217,221,226,.995)"></div>
<div class="abs" style="left:845.5px;top:172.0px;width:9px;height:1px;background:rgba(217,221,226,.995)"></div>
<div class="abs" style="left:845.5px;top:194.0px;width:9px;height:1px;background:rgba(217,221,226,.995)"></div>
<div class="it" style="top:166.0px"><svg style="top:4.3px;left:6px" width="12.4" height="10.6" viewBox="0 0 12.4 10.6"><rect x="0" y="0" width="5.8" height="10.6" fill="#43557d"/><rect x="6.6" y="0" width="5.8" height="10.6" fill="#43557d"/><rect x="5.8" y="0" width="0.8" height="10.6" fill="#b8c2d8"/><rect x="1.4" y="1.5" width="3" height="3" fill="#f2cf3a"/><rect x="8" y="1.5" width="3" height="3" fill="#f2cf3a"/></svg>Двусторонний замок №3 <span class="ip">(10.0.92.49)</span></div>
<div class="it" style="top:188.0px"><svg style="top:3.6px;left:7px" width="10" height="12" viewBox="0 0 10 12" fill="none" stroke="#5f6670" stroke-width="0.9"><path d="M5 0.7C3.7 1.7 2.2 2 0.6 2V6c0 2.6 1.9 4.3 4.4 5.3 2.5-1 4.4-2.7 4.4-5.3V2C7.8 2 6.3 1.7 5 0.7z"/></svg>Пожарная зона №6 <span class="ip">(172.17.1.148)</span></div>
<div class="grp" style="top:208.5px"><b>Новая комната 18</b><i>Помещение</i></div>
<div class="grp" style="top:241.5px"><b>Переговорная</b><i>Помещение</i></div>
<div class="abs" style="left:845.5px;top:271px;width:1px;height:33.5px;background:rgba(217,221,226,.995)"></div>
<div class="abs" style="left:845.5px;top:281.5px;width:9px;height:1px;background:rgba(217,221,226,.995)"></div>
<div class="abs" style="left:845.5px;top:303.5px;width:9px;height:1px;background:rgba(217,221,226,.995)"></div>
<div class="it" style="top:275.5px"><svg style="top:4.3px;left:6px" width="12.4" height="10.6" viewBox="0 0 12.4 10.6"><rect x="0" y="0" width="5.8" height="10.6" fill="#43557d"/><rect x="6.6" y="0" width="5.8" height="10.6" fill="#43557d"/><rect x="5.8" y="0" width="0.8" height="10.6" fill="#b8c2d8"/><rect x="1.4" y="1.5" width="3" height="3" fill="#f2cf3a"/><rect x="8" y="1.5" width="3" height="3" fill="#f2cf3a"/></svg>Двусторонний замок №3 <span class="ip">(10.3.9.29)</span></div>
<div class="it" style="top:297.5px"><svg style="top:3.6px;left:7px" width="10" height="12" viewBox="0 0 10 12" fill="none" stroke="#5f6670" stroke-width="0.9"><path d="M5 0.7C3.7 1.7 2.2 2 0.6 2V6c0 2.6 1.9 4.3 4.4 5.3 2.5-1 4.4-2.7 4.4-5.3V2C7.8 2 6.3 1.7 5 0.7z"/></svg>Пожарная зона №7 <span class="ip">(172.17.1.148)</span></div>
<div class="grp" style="top:318.0px"><b>Ресепшн</b><i>Помещение</i></div>
<div class="abs" style="left:845.5px;top:348px;width:1px;height:109.5px;background:rgba(217,221,226,.995)"></div>
<div class="abs" style="left:845.5px;top:358.0px;width:9px;height:1px;background:rgba(217,221,226,.995)"></div>
<div class="abs" style="left:845.5px;top:380.0px;width:9px;height:1px;background:rgba(217,221,226,.995)"></div>
<div class="abs" style="left:845.5px;top:405.5px;width:9px;height:1px;background:rgba(217,221,226,.995)"></div>
<div class="abs" style="left:845.5px;top:434.5px;width:9px;height:1px;background:rgba(217,221,226,.995)"></div>
<div class="abs" style="left:845.5px;top:456.5px;width:9px;height:1px;background:rgba(217,221,226,.995)"></div>
<div class="it" style="top:352.0px"><svg style="top:3px;left:8px" width="8" height="13" viewBox="0 0 8 13"><rect x="0" y="0" width="8" height="12.6" rx="0.8" fill="#43557d"/><rect x="1.4" y="1.3" width="5.2" height="1.3" fill="#f2cf3a"/><rect x="1.7" y="4" width="4.6" height="6.6" rx="0.5" fill="none" stroke="#c9d0de" stroke-width="0.6"/></svg>Контроллер CL15 <span class="ip">(172.17.100.1)</span></div>
<div class="it" style="top:374.0px;background:rgba(227,231,237,.995)"><svg style="top:4.3px;left:6px" width="12.4" height="10.6" viewBox="0 0 12.4 10.6"><rect x="0" y="0" width="5.8" height="10.6" fill="#43557d"/><rect x="6.6" y="0" width="5.8" height="10.6" fill="#43557d"/><rect x="5.8" y="0" width="0.8" height="10.6" fill="#b8c2d8"/><rect x="1.4" y="1.5" width="3" height="3" fill="#f2cf3a"/><rect x="8" y="1.5" width="3" height="3" fill="#f2cf3a"/></svg>Двусторонний замок №1 <span class="ip">(10.3.9.29)</span></div>
<div class="it" style="top:395.5px;height:28.5px;line-height:11.6px;padding-top:3.7px"><svg style="top:10px;left:6.5px" width="12" height="9" viewBox="0 0 12 9"><path fill="#43557d" d="M0 0H11.5V3C11.5 3.8 10.9 4.2 10.2 4.2H4.5L2.7 3.3Z"/><path fill="none" stroke="#43557d" stroke-width="1.1" d="M6.6 4V6.6L11.3 7.8"/></svg>Видеокамера Интеллект X<br><span class="ip" style="font-size:7.7px;margin-left:0">(Камера 172.17.100.139)</span></div>
<div class="it" style="top:428.5px"><svg style="top:3.6px;left:7px" width="10" height="12" viewBox="0 0 10 12" fill="none" stroke="#5f6670" stroke-width="0.9"><path d="M5 0.7C3.7 1.7 2.2 2 0.6 2V6c0 2.6 1.9 4.3 4.4 5.3 2.5-1 4.4-2.7 4.4-5.3V2C7.8 2 6.3 1.7 5 0.7z"/></svg>Пожарная зона №1 <span class="ip">(172.17.1.148)</span></div>
<div class="it" style="top:450.5px"><svg style="top:3.6px;left:7px" width="10" height="12" viewBox="0 0 10 12" fill="none" stroke="#5f6670" stroke-width="0.9"><path d="M5 0.7C3.7 1.7 2.2 2 0.6 2V6c0 2.6 1.9 4.3 4.4 5.3 2.5-1 4.4-2.7 4.4-5.3V2C7.8 2 6.3 1.7 5 0.7z"/></svg>Охранная зона №5 <span class="ip">(172.17.1.148)</span></div>
<div class="grp" style="top:471.5px"><b>Тестовая</b><i>Помещение</i></div>
<div class="abs" style="left:845.5px;top:501px;width:1px;height:33.0px;background:rgba(217,221,226,.995)"></div>
<div class="abs" style="left:845.5px;top:511.0px;width:9px;height:1px;background:rgba(217,221,226,.995)"></div>
<div class="abs" style="left:845.5px;top:533.0px;width:9px;height:1px;background:rgba(217,221,226,.995)"></div>
<div class="it" style="top:505.0px"><svg style="top:4.3px;left:6px" width="12.4" height="10.6" viewBox="0 0 12.4 10.6"><rect x="0" y="0" width="5.8" height="10.6" fill="#43557d"/><rect x="6.6" y="0" width="5.8" height="10.6" fill="#43557d"/><rect x="5.8" y="0" width="0.8" height="10.6" fill="#b8c2d8"/><rect x="1.4" y="1.5" width="3" height="3" fill="#f2cf3a"/><rect x="8" y="1.5" width="3" height="3" fill="#f2cf3a"/></svg>Двусторонний замок №2 <span class="ip">(10.0.92.49)</span></div>
<div class="it" style="top:527.0px"><svg style="top:3.6px;left:7px" width="10" height="12" viewBox="0 0 10 12" fill="none" stroke="#5f6670" stroke-width="0.9"><path d="M5 0.7C3.7 1.7 2.2 2 0.6 2V6c0 2.6 1.9 4.3 4.4 5.3 2.5-1 4.4-2.7 4.4-5.3V2C7.8 2 6.3 1.7 5 0.7z"/></svg>Пожарная зона №3 <span class="ip">(172.17.1.148)</span></div>
<div class="grp" style="top:548.0px"><b>Склад</b><i>Помещение</i></div>
<div class="abs" style="left:845.5px;top:578px;width:1px;height:77.0px;background:rgba(217,221,226,.995)"></div>
<div class="abs" style="left:845.5px;top:588.0px;width:9px;height:1px;background:rgba(217,221,226,.995)"></div>
<div class="abs" style="left:845.5px;top:610.0px;width:9px;height:1px;background:rgba(217,221,226,.995)"></div>
<div class="abs" style="left:845.5px;top:632.0px;width:9px;height:1px;background:rgba(217,221,226,.995)"></div>
<div class="abs" style="left:845.5px;top:654.0px;width:9px;height:1px;background:rgba(217,221,226,.995)"></div>
<div class="it" style="top:582.0px"><svg style="top:5.5px;left:6.5px" width="12" height="9" viewBox="0 0 12 9"><path fill="#43557d" d="M0 0H11.5V3C11.5 3.8 10.9 4.2 10.2 4.2H4.5L2.7 3.3Z"/><path fill="none" stroke="#43557d" stroke-width="1.1" d="M6.6 4V6.6L11.3 7.8"/></svg>Видеокамера <span class="ip">(10.0.100.132)</span></div>
<div class="it" style="top:604.0px"><svg style="top:4.5px;left:7.5px" width="10" height="10" viewBox="0 0 10 10"><rect x="0" y="0" width="10" height="10" fill="#43557d"/></svg>Контроллер CR02.9 <span class="ip">(10.2.128.68)</span></div>
<div class="it" style="top:626.0px"><svg style="top:4.3px;left:6px" width="12.4" height="10.6" viewBox="0 0 12.4 10.6"><rect x="0" y="0" width="5.8" height="10.6" fill="#43557d"/><rect x="6.6" y="0" width="5.8" height="10.6" fill="#43557d"/><rect x="5.8" y="0" width="0.8" height="10.6" fill="#b8c2d8"/><rect x="1.4" y="1.5" width="3" height="3" fill="#f2cf3a"/><rect x="8" y="1.5" width="3" height="3" fill="#f2cf3a"/></svg>Двусторонний замок №1 <span class="ip">(10.0.92.49)</span></div>
<div class="it" style="top:648.0px"><svg style="top:3.6px;left:7px" width="10" height="12" viewBox="0 0 10 12" fill="none" stroke="#5f6670" stroke-width="0.9"><path d="M5 0.7C3.7 1.7 2.2 2 0.6 2V6c0 2.6 1.9 4.3 4.4 5.3 2.5-1 4.4-2.7 4.4-5.3V2C7.8 2 6.3 1.7 5 0.7z"/></svg>Пожарная зона №2 <span class="ip">(172.17.1.148)</span></div>
<div class="grp" style="top:669.0px"><b>Комната охраны</b><i>Помещение</i></div>
<div class="abs" style="left:845.5px;top:699px;width:1px;height:28.5px;background:rgba(217,221,226,.995)"></div>
<div class="abs" style="left:845.5px;top:708.5px;width:9px;height:1px;background:rgba(217,221,226,.995)"></div>
<div class="abs" style="left:845.5px;top:726.5px;width:9px;height:1px;background:rgba(217,221,226,.995)"></div>
<div class="it" style="top:702.5px"><svg style="top:4.3px;left:6px" width="12.4" height="10.6" viewBox="0 0 12.4 10.6"><rect x="0" y="0" width="5.8" height="10.6" fill="#43557d"/><rect x="6.6" y="0" width="5.8" height="10.6" fill="#43557d"/><rect x="5.8" y="0" width="0.8" height="10.6" fill="#b8c2d8"/><rect x="1.4" y="1.5" width="3" height="3" fill="#f2cf3a"/><rect x="8" y="1.5" width="3" height="3" fill="#f2cf3a"/></svg>Двусторонний замок №2 <span class="ip">(10.3.9.29)</span></div>
<div class="abs tab" style="left:1056px;top:74px;width:64px">Команды<span class="x" style="left:50px">×</span></div>
<div class="abs panel" style="left:1054.7px;top:89px;width:225.3px;height:631px"></div>
<div class="abs" style="left:1270px;top:89px;width:5px;height:640px;background:rgba(220,220,220,.995);border-radius:3px"></div>
<div class="abs" style="left:1270px;top:89px;width:5px;height:574px;background:rgba(125,125,125,.995);border-radius:3px"></div>
<div class="cmdh" style="top:98.5px">Генератор тревоги</div>
<div class="hr" style="top:118px"></div>
<div class="cb" style="top:135.5px">Сбросить тревогу</div>
<div class="cb" style="top:166.0px">Поднять тревогу</div>
<div class="cmdh" style="top:203.5px">Считыватель 1 (в Неконтролируемая</div>
<div class="cmdh" style="top:217.5px">территория)</div>
<div class="hr" style="top:237px"></div>
<div class="cb" style="top:254.0px">Установить режим работы "Открыто"</div>
<div class="cb" style="top:284.7px;background:rgba(228,231,235,.995)">Установить режим работы "Контроль"</div>
<div class="cb" style="top:315.4px">Установить режим работы "Закрыто"</div>
<div class="cb" style="top:346.1px">Открыть (разблокировать) ИУ</div>
<div class="cb" style="top:376.8px">Закрыть (заблокировать) ИУ</div>
<div class="cmdh" style="top:414.5px">Считыватель 2 (в Ресепшн)</div>
<div class="hr" style="top:433px"></div>
<div class="cb" style="top:450.5px">Установить режим работы "Открыто"</div>
<div class="cb" style="top:481.2px">Установить режим работы "Контроль"</div>
<div class="cb" style="top:511.9px">Установить режим работы "Закрыто"</div>
<div class="cb" style="top:542.6px">Открыть (разблокировать) ИУ</div>
<div class="cb" style="top:573.3px">Закрыть (заблокировать) ИУ</div>
<div class="cmdh" style="top:610.5px">ИУ</div>
<div class="hr" style="top:630px"></div>
<div class="cb" style="top:647.5px">Поставить на охрану</div>
<div class="cb" style="top:678.2px">Снять с охраны</div>
<div class="cb" style="top:708.9px">Снять тревогу</div>
</div>
</body>
</html>
